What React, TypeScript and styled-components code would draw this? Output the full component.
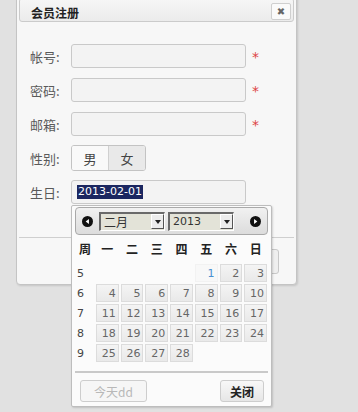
import React from "react";
import styled, { createGlobalStyle } from "styled-components";

const Global = createGlobalStyle`
  html, body { margin: 0; padding: 0; }
  body {
    background: #e1e1e1;
    width: 358px;
    height: 412px;
    overflow: hidden;
    font-family: "Noto Sans CJK SC", "DejaVu Sans", sans-serif;
  }
`;

const Page = styled.div`
  position: relative;
  display: flow-root;
  width: 358px;
  height: 412px;
  padding-left: 16px;
  box-sizing: border-box;
`;

const Dialog = styled.div`
  width: 281px;
  margin-top: -5px;
  background: #f7f7f7;
  border: 1px solid #c4c4c4;
  border-radius: 4px;
  box-shadow: 1px 1px 2px rgba(0, 0, 0, 0.12);
  box-sizing: border-box;
  padding: 2px 2px 0;
  display: flex;
  flex-direction: column;
`;

const TitleBar = styled.div`
  height: 24px;
  display: flex;
  align-items: center;
  justify-content: space-between;
  padding: 0 2px 0 11px;
  background: linear-gradient(#f6f6f6, #ebebeb);
  border: 1px solid #cbcbcb;
  border-radius: 3px;
  box-sizing: border-box;
`;

const Title = styled.span`
  font-size: 12px;
  font-weight: bold;
  color: #222;
  padding-top: 5px;
`;

const CloseBtn = styled.span`
  width: 20px;
  height: 17px;
  margin-top: 3px;
  border: 1px solid #cfcfcf;
  border-radius: 2px;
  background: #fafafa;
  display: flex;
  align-items: center;
  justify-content: center;
  color: #666;
  font-size: 10px;
  font-family: "DejaVu Sans", sans-serif;
  box-sizing: border-box;
`;

const Form = styled.div`
  padding: 22px 0 0 11px;
  display: flex;
  flex-direction: column;
  gap: 10px;
  height: 215px;
  box-sizing: border-box;
`;

const Row = styled.div`
  display: flex;
  align-items: center;
  height: 24px;
`;

const Label = styled.span`
  width: 41px;
  font-size: 13px;
  color: #5a5a5a;
`;

const Input = styled.div`
  width: 175px;
  height: 24px;
  border: 1px solid #c9c9c9;
  border-radius: 3px;
  background: #f3f3f3;
  box-sizing: border-box;
  display: flex;
  align-items: center;
  padding-left: 5px;
`;

const Star = styled.span`
  margin-left: 6px;
  color: #d44;
  font-size: 14px;
  font-family: "DejaVu Sans", sans-serif;
  padding-top: 2px;
`;

const Toggle = styled.div`
  display: flex;
  height: 26px;
  border: 1px solid #c3c3c3;
  border-radius: 3px;
  overflow: hidden;
  box-sizing: border-box;
`;

const ToggleBtn = styled.span<{ $on?: boolean }>`
  width: 36px;
  display: flex;
  align-items: center;
  justify-content: center;
  font-size: 13px;
  color: #444;
  background: ${(p) => (p.$on ? "#f9f9f9" : "#e9e9e9")};
  border-right: ${(p) => (p.$on ? "1px solid #d0d0d0" : "none")};
`;

const Selected = styled.span`
  background: #1b2660;
  color: #fff;
  font-family: "DejaVu Sans", sans-serif;
  font-size: 11px;
  line-height: 14px;
  padding: 0 1px;
`;

const Footer = styled.div`
  border-top: 1px solid #cfcfcf;
  height: 46px;
  display: flex;
  justify-content: flex-end;
  align-items: center;
  padding-right: 15px;
`;

const FooterBtn = styled.span`
  width: 44px;
  height: 25px;
  border: 1px solid #c8c8c8;
  border-radius: 3px;
  background: #efefef;
  box-sizing: border-box;
`;

const Calendar = styled.div`
  position: absolute;
  left: 71px;
  top: 205px;
  width: 201px;
  height: 202px;
  background: #fbfbfb;
  border: 1px solid #bdbdbd;
  border-radius: 2px;
  box-shadow: 1px 1px 2px rgba(0, 0, 0, 0.15);
  box-sizing: border-box;
  padding: 1px 3px 3px;
  display: flex;
  flex-direction: column;
`;

const CalHead = styled.div`
  height: 28px;
  flex: none;
  border: 1px solid #a9a9a9;
  border-radius: 4px;
  background: linear-gradient(#f1f1f1, #dcdcdc);
  display: flex;
  align-items: center;
  padding: 0 6px 0 6px;
  box-sizing: border-box;
`;

const NavIcon = styled.svg`
  width: 11px;
  height: 11px;
  flex: none;
`;

const Select = styled.div<{ $w: number }>`
  width: ${(p) => p.$w}px;
  height: 19px;
  background: #e3e3d8;
  border-top: 2px solid #6a6a6a;
  border-left: 2px solid #6a6a6a;
  border-bottom: 1px solid #fff;
  border-right: 1px solid #fff;
  box-sizing: border-box;
  display: flex;
  align-items: center;
  justify-content: space-between;
  font-size: 12px;
  color: #333;
  padding-left: 3px;
`;

const SelText = styled.span<{ $num?: boolean }>`
  font-family: ${(p) =>
    p.$num ? '"DejaVu Sans", sans-serif' : '"Noto Sans CJK SC", sans-serif'};
  font-size: ${(p) => (p.$num ? "11px" : "12px")};
`;

const Arrow = styled.span`
  width: 13px;
  height: 15px;
  background: #ececec;
  border-left: 1px solid #fff;
  border-top: 1px solid #fff;
  border-right: 1px solid #555;
  border-bottom: 1px solid #555;
  box-sizing: border-box;
  display: flex;
  align-items: center;
  justify-content: center;
  &::after {
    content: "";
    border-left: 3px solid transparent;
    border-right: 3px solid transparent;
    border-top: 4px solid #222;
  }
`;

const Grid = styled.div`
  display: grid;
  grid-template-columns: 20px repeat(7, 1fr);
  grid-template-rows: 27px;
  grid-auto-rows: 20px;
  margin-top: 1px;
  flex: none;
`;

const WeekDay = styled.span`
  display: flex;
  align-items: center;
  justify-content: center;
  font-size: 12px;
  font-weight: bold;
  color: #222;
  padding-bottom: 3px;
`;

const WeekNo = styled.span`
  font-family: "DejaVu Sans", sans-serif;
  font-size: 11px;
  color: #444;
  display: flex;
  align-items: center;
  padding-left: 2px;
`;

const Day = styled.span<{ $today?: boolean }>`
  margin: 1px;
  border: 1px solid ${(p) => (p.$today ? "#f2f2f2" : "#dcdcdc")};
  background: ${(p) => (p.$today ? "#f8f8f8" : "linear-gradient(#f4f4f4, #e9e9e9)")};
  color: ${(p) => (p.$today ? "#4a90d0" : "#666")};
  font-family: "DejaVu Sans", sans-serif;
  font-size: 11px;
  display: flex;
  align-items: center;
  justify-content: flex-end;
  padding-right: 2px;
  box-sizing: border-box;
`;

const Empty = styled.span``;

const CalFoot = styled.div`
  margin-top: auto;
  border-top: 2px solid #c9c9c9;
  display: flex;
  justify-content: space-between;
  padding: 7px 4px 0 5px;
  height: 32px;
  box-sizing: border-box;
`;

const CalBtn = styled.span<{ $disabled?: boolean }>`
  height: 22px;
  padding: 0 ${(p) => (p.$disabled ? "13px" : "9px")};
  border: 1px solid #cdcdcd;
  border-radius: 3px;
  background: ${(p) => (p.$disabled ? "#f6f6f6" : "linear-gradient(#f8f8f8, #e6e6e6)")};
  color: ${(p) => (p.$disabled ? "#b8b8b8" : "#222")};
  font-weight: ${(p) => (p.$disabled ? "normal" : "bold")};
  font-size: 12px;
  display: flex;
  align-items: center;
  box-sizing: border-box;
`;

const weekdays = ["周", "一", "二", "三", "四", "五", "六", "日"];
const weeks: { no: number; days: (number | null)[] }[] = [
  { no: 5, days: [null, null, null, null, 1, 2, 3] },
  { no: 6, days: [4, 5, 6, 7, 8, 9, 10] },
  { no: 7, days: [11, 12, 13, 14, 15, 16, 17] },
  { no: 8, days: [18, 19, 20, 21, 22, 23, 24] },
  { no: 9, days: [25, 26, 27, 28, null, null, null] },
];

const Nav = ({ dir }: { dir: "l" | "r" }) => (
  <NavIcon viewBox="0 0 12 12">
    <circle cx="6" cy="6" r="6" fill="#111" />
    {dir === "l" ? (
      <path d="M7.6 3.3 L4 6 L7.6 8.7 Z" fill="#fff" />
    ) : (
      <path d="M4.4 3.3 L8 6 L4.4 8.7 Z" fill="#fff" />
    )}
  </NavIcon>
);

export default function App() {
  return (
    <Page>
      <Global />
      <Dialog>
        <TitleBar>
          <Title>会员注册</Title>
          <CloseBtn>✖</CloseBtn>
        </TitleBar>
        <Form>
          <Row>
            <Label>帐号:</Label>
            <Input />
            <Star>*</Star>
          </Row>
          <Row>
            <Label>密码:</Label>
            <Input />
            <Star>*</Star>
          </Row>
          <Row>
            <Label>邮箱:</Label>
            <Input />
            <Star>*</Star>
          </Row>
          <Row>
            <Label>性别:</Label>
            <Toggle>
              <ToggleBtn $on>男</ToggleBtn>
              <ToggleBtn>女</ToggleBtn>
            </Toggle>
          </Row>
          <Row>
            <Label>生日:</Label>
            <Input>
              <Selected>2013-02-01</Selected>
            </Input>
          </Row>
        </Form>
        <Footer>
          <FooterBtn />
        </Footer>
      </Dialog>
      <Calendar>
        <CalHead>
          <Nav dir="l" />
          <Select $w={66} style={{ marginLeft: 6 }}>
            <SelText>二月</SelText>
            <Arrow />
          </Select>
          <Select $w={66} style={{ marginLeft: 3 }}>
            <SelText $num>2013</SelText>
            <Arrow />
          </Select>
          <span style={{ flex: 1 }} />
          <Nav dir="r" />
        </CalHead>
        <Grid>
          {weekdays.map((w) => (
            <WeekDay key={w}>{w}</WeekDay>
          ))}
          {weeks.map((wk) => (
            <React.Fragment key={wk.no}>
              <WeekNo>{wk.no}</WeekNo>
              {wk.days.map((d, i) =>
                d === null ? (
                  <Empty key={i} />
                ) : (
                  <Day key={i} $today={d === 1}>
                    {d}
                  </Day>
                )
              )}
            </React.Fragment>
          ))}
        </Grid>
        <CalFoot>
          <CalBtn $disabled>今天dd</CalBtn>
          <CalBtn>关闭</CalBtn>
        </CalFoot>
      </Calendar>
    </Page>
  );
}
